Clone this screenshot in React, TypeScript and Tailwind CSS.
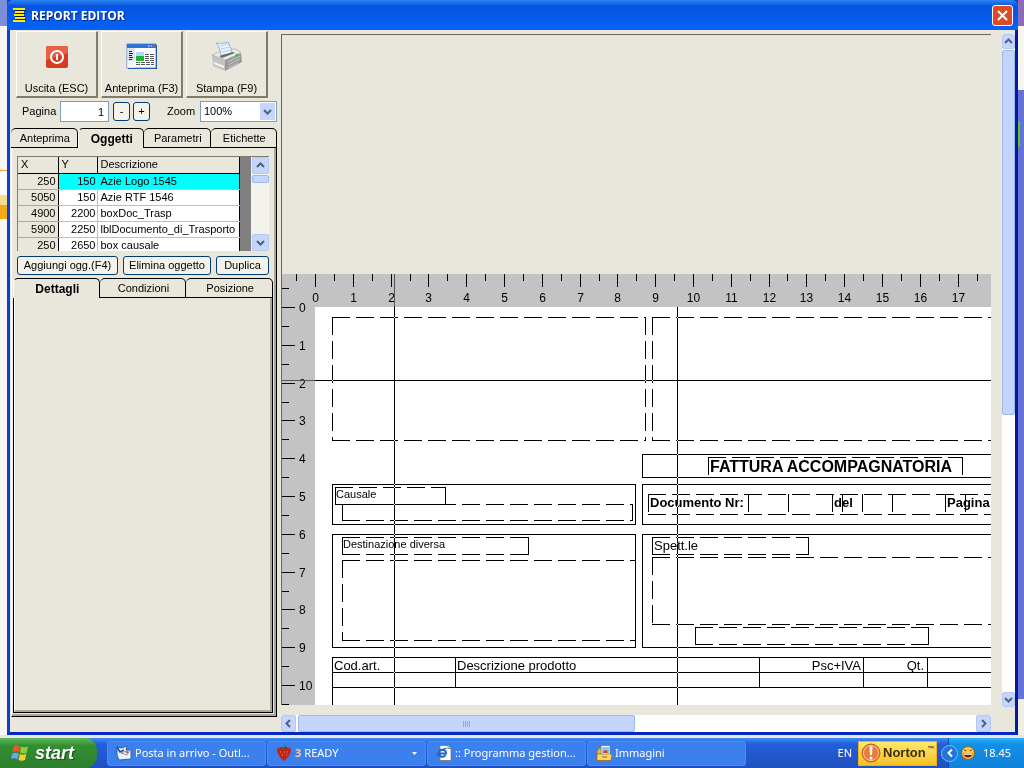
import { useState } from "react"
import type { ReactNode } from "react"
import clsx from "clsx"

const CM = 37.8

const objects = [
  { x: 250, y: 150, name: "Azie Logo 1545" },
  { x: 5050, y: 150, name: "Azie RTF 1546" },
  { x: 4900, y: 2200, name: "boxDoc_Trasp" },
  { x: 5900, y: 2250, name: "lblDocumento_di_Trasporto" },
  { x: 250, y: 2650, name: "box causale" },
]

/* ---------- icons ---------- */

function AppIcon() {
  return (
    <svg width="14" height="14" viewBox="0 0 14 14" shapeRendering="crispEdges">
      <path d="M2 2.500h12M4 5.500h9M3 8.500h10M4 11.500h10" stroke="#101840" />
      <path d="M1 1h12M3 4h9M2 7h10M3 10h10M1 13h12" stroke="#ffee00" strokeWidth="2" />
    </svg>
  )
}

function PowerIcon() {
  return (
    <svg width="32" height="32" viewBox="0 0 32 32">
      <rect x="5" y="5" width="22" height="22" rx="2" fill="#d63a20" />
      <path d="M5 7a2 2 0 0 1 2-2h18a2 2 0 0 1 2 2v5L5 19z" fill="#e8604a" />
      <circle cx="16" cy="16" r="6" fill="none" stroke="#fff" strokeWidth="2" />
      <path d="M16 13v6" stroke="#fff" strokeWidth="2" />
    </svg>
  )
}

function PreviewIcon() {
  return (
    <svg width="32" height="32" viewBox="0 0 32 32">
      <path d="M2 4h29v24H2z" fill="#1c4a96" />
      <path d="M1 3h29v24H1z" fill="#fff" stroke="#3a78d0" strokeWidth=".8" />
      <path d="M1 3h29v4H1z" fill="#2f74d4" />
      <path d="M22 5h2M25 5h1" stroke="#cfe2ff" />
      <path d="M27 5h2" stroke="#e0503a" strokeWidth="2" />
      <path d="M1.500 7H9v19.500H1.500z" fill="#dde3ec" />
      <path d="M1.500 20H9v6.500H1.500z" fill="#f2f5fa" />
      <path d="M3 10.500h3M3 12.500h4M3 14.500h3M3 16.500h4M3 18.500h3" stroke="#222" />
      <path d="M10 11h8v5h-8z" fill="#a8dcf0" />
      <path d="M10 15h8v5h-8z" fill="#22b434" />
      <path d="M19 13.500h9M19 15.500h9M19 17.500h9M19 19.500h9M10 21.500h18M10 23.500h18" stroke="#555" strokeDasharray="4 1" />
    </svg>
  )
}

function PrinterIcon() {
  return (
    <svg width="32" height="32" viewBox="0 0 32 32">
      <path d="M1 14l13 5v11L2 25z" fill="#c4c4c4" />
      <path d="M14 19l16-7 1 9-17 9z" fill="#9a9a9a" />
      <path d="M1 14l12-5 11-1 6 4-16 7z" fill="#ededed" stroke="#999" strokeWidth=".6" />
      <path d="M5 2c4 1 9 0 12-1l4 9c-1 3-7 5-11 4C9 9 8 5 5 2z" fill="#e9f3ff" stroke="#86a4c8" strokeWidth=".8" />
      <path d="M9 5l8-2M10 8l9-2M11 11l9-2" stroke="#b9d0ec" />
      <path d="M8 15l14-4 2 1-13 5z" fill="#6a6a6a" />
      <path d="M3 21l10 4v2L3 23z" fill="#f7f7f7" />
      <path d="M17 21l12-6M17 24l12-6M17 27l10-5" stroke="#c9c9c9" />
      <circle cx="26" cy="14" r="1.500" fill="#35c435" />
    </svg>
  )
}

function Chevron({ dir }: { dir: "up" | "down" | "left" | "right" }) {
  const d = {
    up: "M1 6l3.500-3.500L8 6",
    down: "M1 3l3.500 3.500L8 3",
    left: "M6 1L2.500 4.500 6 8",
    right: "M3 1l3.500 3.500L3 8",
  }[dir]
  return (
    <svg width="9" height="9" viewBox="0 0 9 9">
      <path d={d} fill="none" stroke="#4d6185" strokeWidth="2" />
    </svg>
  )
}

function WindowsFlag() {
  return (
    <svg width="18" height="18" viewBox="0 0 18 18">
      <path d="M3 2c2-1 4-1 6 0L8 8C6 7 4 7 1.500 8z" fill="#f0542a" />
      <path d="M10 2.500c2 1 4 1 7 0L15.500 9C13 10 11 9.500 9 8.500z" fill="#8bd03a" />
      <path d="M1.300 9.500c2-1 4-1 6.500 0L6.500 15C4.500 14 2 14 0 15z" fill="#6fa3f5" />
      <path d="M8.800 10c2 1 4 1 6.500 0L14 16c-2 1-4.500 1-6.500 0z" fill="#fccc2e" />
    </svg>
  )
}

function MailIcon() {
  return (
    <svg width="16" height="16" viewBox="0 0 16 16">
      <path d="M1 2l5 1 5-2-1 4 5-1v10l-12 1-2-5z" fill="#e9f1fc" stroke="#1c4c96" strokeWidth=".8" />
      <path d="M5 8l9-3-3 5z" fill="#fff" stroke="#5c86c4" strokeWidth=".8" />
      <path d="M1 2l3 5 4-2" fill="none" stroke="#1c4c96" strokeWidth="1.500" />
      <circle cx="11" cy="7" r="1.500" fill="#e0682e" />
    </svg>
  )
}

function BerryIcon() {
  return (
    <svg width="16" height="16" viewBox="0 0 16 16">
      <path d="M1 5c0-3 5-3 7-1 2-2 7-2 7 1 0 4-4 9-7 11C5 14 1 9 1 5z" fill="#c4221c" />
      <path d="M3 3l3-1 2 1 1-3 1 2 3 1-4 1-1 1-2-1z" fill="#5b4a22" />
      <path d="M4 7h1M8 7h1M11 7h1M6 10h1M10 10h1" stroke="#f08a50" />
    </svg>
  )
}

function ExplorerIcon() {
  return (
    <svg width="16" height="16" viewBox="0 0 16 16">
      <path d="M4 .5h8l3 3v12H4z" fill="#fff" stroke="#777" strokeWidth=".8" />
      <path d="M12 .5v3h3" fill="#ddd" stroke="#777" strokeWidth=".8" />
      <path d="M3 8.500h7c0-5-7-5-7 0 0 4 5 4 6.500 1.500" fill="none" stroke="#1c64c8" strokeWidth="2" />
      <path d="M0 12C1 8 5 4 11 3" fill="none" stroke="#1c64c8" />
    </svg>
  )
}

function PicturesIcon() {
  return (
    <svg width="16" height="16" viewBox="0 0 16 16">
      <path d="M1 6l2-3h3v12H1z" fill="#e8b53a" stroke="#94661a" strokeWidth=".7" />
      <path d="M5 .5h9v9H5z" fill="#fff" stroke="#777" strokeWidth=".8" />
      <path d="M6 2h7v6H6z" fill="#8cc4f4" />
      <path d="M7 8c0-4 5-4 5 0z" fill="#d24a35" />
      <path d="M1 9h15l-1 6.500H1z" fill="#fbd862" stroke="#94661a" strokeWidth=".7" />
      <path d="M6 12h5" stroke="#94661a" />
    </svg>
  )
}

function NortonIcon() {
  return (
    <svg width="20" height="20" viewBox="0 0 20 20">
      <circle cx="10" cy="10" r="9" fill="#ee7a35" stroke="#b5651c" />
      <circle cx="10" cy="10" r="7.500" fill="none" stroke="#ffc9a0" />
      <path d="M8.500 3.500h3L11 12H9z" fill="#fff" />
      <circle cx="10" cy="15" r="1.500" fill="#fff" />
    </svg>
  )
}

function SmileIcon() {
  return (
    <svg width="14" height="14" viewBox="0 0 14 14">
      <circle cx="7" cy="7" r="6.500" fill="#fbc848" stroke="#a05c10" />
      <path d="M3.500 4l1.500.8M10.500 4L9 4.800" stroke="#402000" />
      <path d="M2.500 7h9c0 6-9 6-9 0z" fill="#7a1a10" />
      <path d="M3 7.300h8v1.500H3z" fill="#fff" />
    </svg>
  )
}

/* ---------- small controls ---------- */

function ToolButton({ icon, children }: { icon: ReactNode; children: ReactNode }) {
  return (
    <button className="flex h-[67px] w-[82px] flex-col items-center justify-between border-t border-l border-r-2 border-b-2 border-t-white border-l-white border-r-[#807c6c] border-b-[#807c6c] pt-[9px] pb-px">
      {icon}
      <span className="leading-[14px] whitespace-nowrap">{children}</span>
    </button>
  )
}

function XpButton({ className, children }: { className?: string; children: ReactNode }) {
  return (
    <button
      className={clsx(
        "flex h-[19px] items-center justify-center rounded-[3px] border border-[#003c74] bg-[#f4f2ea] whitespace-nowrap",
        className
      )}
    >
      {children}
    </button>
  )
}

function ScrollButton({ dir, className }: { dir: "up" | "down" | "left" | "right"; className?: string }) {
  return (
    <button
      aria-label={dir}
      className={clsx(
        "flex shrink-0 items-center justify-center overflow-hidden rounded-[2px] border border-[#b4c8f0] bg-[#c6d5fb]",
        className
      )}
    >
      <Chevron dir={dir} />
    </button>
  )
}

function Tabs({ id, items, value, onChange }: { id: string; items: string[]; value: string; onChange: (v: string) => void }) {
  return (
    <div role="tablist" aria-label={id} className="grid h-5 auto-cols-fr grid-flow-col">
      {items.map((t) => (
        <button
          key={t}
          role="tab"
          aria-selected={t === value}
          onClick={() => onChange(t)}
          className={clsx(
            "min-w-0 rounded-t-[5px] border-t border-r border-black pl-[2px]",
            t === value ? "border-l border-l-white pt-px text-[12px] font-bold" : "border-b"
          )}
        >
          {t}
        </button>
      ))}
    </div>
  )
}

/* ---------- left side ---------- */

function ObjectTable() {
  const [selected, setSelected] = useState(0)
  return (
    <div className="flex h-[95px] overflow-hidden border-t border-l border-[#807c6c]">
      <div className="flex flex-1 overflow-hidden bg-[#808080]">
        <table className="w-[222px] table-fixed border-collapse self-start bg-white leading-[15px]">
          <colgroup>
            <col className="w-[40px]" />
            <col className="w-[39px]" />
            <col />
          </colgroup>
          <thead>
            <tr className="h-4 bg-[#e9e7dc] text-left">
              <th className="border-r border-b border-black px-[3px] font-normal">X</th>
              <th className="border-r border-b border-black px-[3px] font-normal">Y</th>
              <th className="border-r border-b border-black px-[3px] font-normal">Descrizione</th>
            </tr>
          </thead>
          <tbody>
            {objects.map((o, i) => (
              <tr key={o.name} onClick={() => setSelected(i)} className={clsx("h-4", i === selected && "bg-[#00ffff]")}>
                <td className="border-r border-b border-r-black border-b-[#aca899] bg-[#e9e7dc] px-[2px] text-right">{o.x}</td>
                <td className="border-r border-b border-[#c0c0c0] px-[1px] text-right">{o.y}</td>
                <td className="border-r border-b border-r-black border-b-[#c0c0c0] px-[3px] whitespace-nowrap">{o.name}</td>
              </tr>
            ))}
          </tbody>
        </table>
      </div>
      <div className="flex w-[18px] flex-col bg-[#f3f2ec] pl-px">
        <ScrollButton dir="up" className="h-[17px]" />
        <div className="mt-px h-2 rounded-[2px] border border-[#9db8ec] bg-[#c6d5fb]" />
        <div className="flex-1" />
        <ScrollButton dir="down" className="h-[17px]" />
      </div>
    </div>
  )
}

function SidePanel() {
  const [tab, setTab] = useState("Oggetti")
  const [detail, setDetail] = useState("Dettagli")
  const [page, setPage] = useState(1)
  return (
    <aside className="flex w-[267px] shrink-0 flex-col pb-[15px] pl-px">
      <div className="flex gap-[3px] pt-px pl-[5px]">
        <ToolButton icon={<PowerIcon />}>Uscita (ESC)</ToolButton>
        <ToolButton icon={<PreviewIcon />}>Anteprima (F3)</ToolButton>
        <ToolButton icon={<PrinterIcon />}>Stampa (F9)</ToolButton>
      </div>

      <div className="mt-[3px] flex h-[21px] items-center">
        <label htmlFor="page" className="w-[49px] pl-[11px]">Pagina</label>
        <input
          id="page"
          value={page}
          onChange={(e) => setPage(Number(e.target.value) || 1)}
          className="h-[21px] w-[49px] border border-[#7f9db9] bg-white px-1 text-right"
        />
        <XpButton className="ml-1 w-[17px]">-</XpButton>
        <XpButton className="ml-[3px] w-[17px]">+</XpButton>
        <label htmlFor="zoom" className="w-[50px] pl-[17px]">Zoom</label>
        <div className="relative flex-1">
          <select id="zoom" className="h-[21px] w-full appearance-none border border-[#7f9db9] bg-white px-[3px]">
            <option>100%</option>
            <option>75%</option>
            <option>50%</option>
          </select>
          <span className="pointer-events-none absolute inset-y-[2px] right-[2px] flex w-[15px] items-center justify-center bg-[#c6d5fb]">
            <Chevron dir="down" />
          </span>
        </div>
      </div>

      <div className="mt-[6px]">
        <Tabs id="Pannello" items={["Anteprima", "Oggetti", "Parametri", "Etichette"]} value={tab} onChange={setTab} />
      </div>
      <div className="flex flex-1 flex-col border-r border-b border-l border-r-black border-b-black border-l-white">
        <div className="flex flex-1 flex-col border-r-2 border-b-2 border-[#aca899] px-px pt-2 pb-px">
          <div className="px-1">
            <ObjectTable />
            <div className="mt-[5px] flex gap-[5px]">
              <XpButton className="w-[101px]">Aggiungi ogg.(F4)</XpButton>
              <XpButton className="flex-1">Elimina oggetto</XpButton>
              <XpButton className="w-[53px]">Duplica</XpButton>
            </div>
          </div>
          <div className="mt-[3px]">
            <Tabs id="Oggetto" items={["Dettagli", "Condizioni", "Posizione"]} value={detail} onChange={setDetail} />
          </div>
          <div className="flex flex-1 border-r border-b border-l border-black">
            <div className="flex-1 border-r-2 border-b-2 border-l border-[#aca899] border-l-white" />
          </div>
        </div>
      </div>
    </aside>
  )
}

/* ---------- design area ---------- */

const steps = (cm: number) => Array.from({ length: cm * 2 + 2 }, (_, i) => i)

function TopRuler() {
  return (
    <svg className="col-span-2 h-full w-full bg-[#c3c3c3]">
      <path d="M0 14.500h7M14.500 0v7" stroke="#000" />
      {steps(17).map((n) => {
        const x = Math.round(33 + (n * CM) / 2)
        const major = n % 2 === 0
        return (
          <g key={n}>
            <path d={`M${x + 0.5} 0v${major ? 13 : 7}`} stroke="#000" />
            {major && (
              <text x={x + 0.5} y="28" textAnchor="middle" fontSize="12">{n / 2}</text>
            )}
          </g>
        )
      })}
      <path d="M112.500 0v33" stroke="#555" />
    </svg>
  )
}

function LeftRuler() {
  return (
    <svg className="h-full w-full overflow-visible bg-[#c3c3c3]">
      {steps(10).map((n) => {
        const y = Math.round((n * CM) / 2)
        const major = n % 2 === 0
        return (
          <g key={n}>
            <path d={`M0 ${y + 0.5}h${major ? 13 : 7}`} stroke="#000" />
            {major && (
              <text x="17" y={y + 5} fontSize="12">{n / 2}</text>
            )}
          </g>
        )
      })}
      <path d="M0 73.500h33" stroke="#555" />
    </svg>
  )
}

function Box({ x, y, w, h, dashed }: { x: number; y: number; w: number; h: number; dashed?: boolean }) {
  return (
    <path
      d={`M${x} ${y + 0.5}h${w + 1}M${x} ${y + h + 0.5}h${w + 1}M${x + 0.5} ${y}v${h + 1}M${x + w + 0.5} ${y}v${h + 1}`}
      stroke="#000"
      fill="none"
      strokeDasharray={dashed ? "18 6" : undefined}
    />
  )
}

// boxes reaching the right margin of the sheet
const WIDE = 3000

function Sheet() {
  return (
    <svg className="h-full w-full bg-white">
      <rect width="100%" height="100%" fill="#fff" />
      <Box x={17} y={10} w={313} h={123} dashed />
      <Box x={337} y={10} w={WIDE} h={123} dashed />

      <Box x={327} y={147} w={WIDE} h={23} />
      <Box x={393} y={150} w={254} h={20} dashed />
      <text x="395" y="165" fontSize="16" fontWeight="bold">FATTURA ACCOMPAGNATORIA</text>

      <Box x={17} y={177} w={303} h={40} />
      <Box x={20} y={180} w={110} h={17} dashed />
      <path d="M20 197.500h111" stroke="#000" />
      <Box x={27} y={197} w={290} h={16} dashed />
      <text x="21" y="191" fontSize="11">Causale</text>

      <Box x={327} y={177} w={WIDE} h={40} />
      <Box x={333} y={187} w={WIDE} h={20} dashed />
      <path
        d="M433.500 187v18M473.500 187v18M517.500 187v18M527.500 187v18M547.500 187v18M577.500 187v18M630.500 187v18M650.500 187v18"
        stroke="#000"
      />
      <g fontSize="13" fontWeight="bold">
        <text x="335" y="200">Documento Nr:</text>
        <text x="519" y="200">del</text>
        <text x="632" y="200">Pagina</text>
      </g>

      <Box x={17} y={227} w={303} h={113} />
      <Box x={27} y={230} w={186} h={17} dashed />
      <Box x={27} y={253} w={293} h={80} dashed />
      <text x="28" y="241" fontSize="11">Destinazione diversa</text>

      <Box x={327} y={227} w={WIDE} h={113} />
      <Box x={337} y={230} w={156} h={17} dashed />
      <Box x={337} y={250} w={WIDE} h={67} dashed />
      <Box x={380} y={320} w={233} h={17} dashed />
      <text x="339" y="243" fontSize="13">Spett.le</text>

      <path d="M17 350.500h3000M17 365.500h3000M17 380.500h3000M17.500 350v2000" stroke="#000" />
      <path d="M140.500 350v31M444.500 350v31M548.500 350v31M612.500 350v31" stroke="#000" />
      <g fontSize="13">
        <text x="19" y="363">Cod.art.</text>
        <text x="142" y="363">Descrizione prodotto</text>
        <text x="546" y="363" textAnchor="end">Psc+IVA</text>
        <text x="609" y="363" textAnchor="end">Qt.</text>
      </g>

      {/* guides are drawn inverted over the sheet */}
      <path className="mix-blend-difference" d="M79.500 0v3000M362.500 0v3000M0 73.500h3000" stroke="#fff" />
    </svg>
  )
}

function DesignArea() {
  return (
    <main className="ml-1 flex min-w-0 flex-1 pt-1">
      <div className="flex min-w-0 flex-1 flex-col">
        <div className="grid min-h-0 flex-1 grid-cols-[33px_1fr] grid-rows-[239px_33px_1fr] overflow-hidden border-t border-l border-[#6b6858]">
          <div className="col-span-2 bg-[#e9e7dc]" />
          <TopRuler />
          <LeftRuler />
          <Sheet />
        </div>
        <div className="mt-[10px] flex h-[17px] bg-white">
          <ScrollButton dir="left" className="w-[15px]" />
          <div className="ml-[2px] flex w-[337px] items-center justify-center gap-px rounded-[2px] border border-[#9db8ec] bg-[#c3d5fc]">
            <i className="h-[6px] w-px bg-[#8ea6dc]" />
            <i className="h-[6px] w-px bg-[#8ea6dc]" />
            <i className="h-[6px] w-px bg-[#8ea6dc]" />
            <i className="h-[6px] w-px bg-[#8ea6dc]" />
          </div>
          <div className="flex-1" />
          <ScrollButton dir="right" className="w-[15px]" />
        </div>
      </div>
      <div className="mb-[25px] ml-[11px] flex w-[13px] flex-col bg-white">
        <ScrollButton dir="up" className="h-[15px]" />
        <div className="mt-px h-[365px] rounded-[2px] border border-[#9db8ec] bg-[#c3d5fc]" />
        <div className="flex-1" />
        <ScrollButton dir="down" className="h-[15px]" />
      </div>
    </main>
  )
}

/* ---------- taskbar ---------- */

function Task({ icon, children }: { icon: ReactNode; children: ReactNode }) {
  return (
    <button className="flex h-[25px] w-[159px] items-center gap-[3px] rounded-[3px] border border-[#4a8cf5] bg-[#3c80ee] px-2 text-left whitespace-nowrap">
      {icon}
      {children}
    </button>
  )
}

function Taskbar() {
  return (
    <footer className="flex h-[30px] shrink-0 items-center overflow-hidden bg-linear-to-b from-[#3f8cf3] via-[#245edb] via-20% to-[#1f50be] font-['Noto_Sans'] text-[11px] text-white">
      <button className="flex h-full w-[97px] items-center gap-[6px] rounded-r-[12px] bg-linear-to-b from-[#5eb85c] via-[#338f33] via-25% to-[#2c7f2c] pl-[11px] font-['Liberation_Sans'] text-[18px] font-bold italic [text-shadow:1px_1px_1px_#1c4c1c]">
        <WindowsFlag />
        start
      </button>
      <nav className="ml-[10px] flex gap-px">
        <Task icon={<MailIcon />}>Posta in arrivo - Outl...</Task>
        <Task icon={<BerryIcon />}>
          <b className="text-[#ffc878]">3</b>
          <span className="flex-1">READY</span>
          <svg width="5" height="3"><path d="M0 0h5L2.500 3z" fill="#fff" /></svg>
        </Task>
        <Task icon={<ExplorerIcon />}>:: Programma gestion...</Task>
        <Task icon={<PicturesIcon />}>Immagini</Task>
      </nav>
      <div className="flex-1" />
      <span>EN</span>
      <button className="ml-[6px] flex h-[25px] w-[79px] items-center gap-[2px] border border-[#f0b020] bg-linear-to-b from-[#ffe868] to-[#f8c020] pl-[2px] font-['Liberation_Sans'] text-[13px] font-bold text-[#3a3010]">
        <NortonIcon />
        <span>Norton</span>
        <span className="self-start pt-[3px] text-[7px] leading-[8px]">™</span>
      </button>
      <div className="ml-[11px] flex h-full w-[76px] items-center border-l border-[#0c4ca8] bg-linear-to-b from-[#2cb0f8] via-[#1290e8] via-20% to-[#0f80d8]">
        <button aria-label="Mostra icone" className="-ml-2 flex size-[17px] shrink-0 items-center justify-center rounded-full border border-[#6cc4f8] bg-[#2474dc]">
          <svg width="6" height="8" viewBox="0 0 6 8">
            <path d="M5 0.500L1.500 4 5 7.500" fill="none" stroke="#fff" strokeWidth="2" />
          </svg>
        </button>
        <span className="ml-[3px]"><SmileIcon /></span>
        <span className="ml-[8px]">18.45</span>
      </div>
    </footer>
  )
}

export default function App() {
  return (
    <div className="flex h-screen flex-col overflow-hidden bg-[#e9e7dc] font-['Liberation_Sans',sans-serif] text-[11px] text-black">
      <div className="flex min-h-0 flex-1">
        {/* slivers of the window behind */}
        <div className="flex w-[7px] flex-col bg-[#f8f7f3]">
          <div className="h-[26px] bg-[#7a8fd8]" />
          <div className="mt-[144px] h-[25px] border-t border-[#f0a030] bg-white" />
          <div className="h-[10px] bg-[#fbdc90]" />
          <div className="h-[14px] bg-[#f5a818]" />
        </div>
        <section className="flex min-w-0 flex-1 flex-col bg-[#0a3fd8]">
          <header className="flex h-[30px] shrink-0 items-center rounded-t-[6px] bg-linear-to-b from-[#2f86f5] via-[#0654e0] via-20% to-[#0463f8] px-[5px]">
            <AppIcon />
            <h1 className="ml-[5px] flex-1 pt-[2px] font-['Open_Sans'] text-[12px] font-bold text-white [text-shadow:1px_1px_0_#0a2a80]">REPORT EDITOR</h1>
            <button aria-label="Chiudi" className="flex size-[21px] items-center justify-center rounded-[3px] border border-white bg-[#dc4a26]">
              <svg width="11" height="11" viewBox="0 0 11 11">
                <path d="M1 1l9 9M10 1l-9 9" stroke="#fff" strokeWidth="2" />
              </svg>
            </button>
          </header>
          <div className="flex min-h-0 flex-1 border-x-[3px] border-b-[3px] border-[#0a3fd8] border-r-[#0418a0] border-b-[#0428c0] bg-[#e9e7dc]">
            <SidePanel />
            <DesignArea />
          </div>
        </section>
        <div className="flex w-[6px] flex-col bg-[#6672d8]">
          <div className="h-[26px] bg-[#8a6cb8]" />
          <div className="h-[64px] bg-[#f8f4ee]" />
          <div className="mt-[31px] h-[26px] w-[2px] bg-[#58c828]" />
          <div className="flex-1" />
          <div className="h-[36px] bg-[#f0ede2]" />
        </div>
      </div>
      <div className="h-[3px] shrink-0" />
      <Taskbar />
    </div>
  )
}
